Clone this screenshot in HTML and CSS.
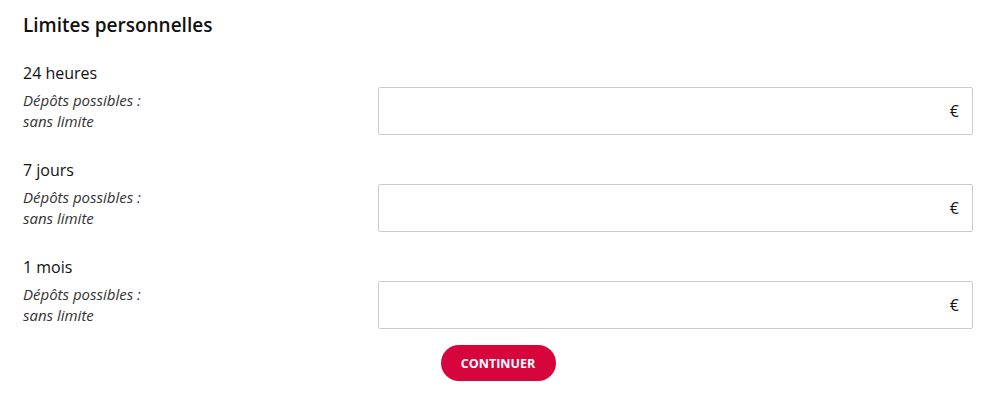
FILE: index.html
```html
<!DOCTYPE html>
<html lang="fr">
<head>
    <meta charset="UTF-8">
    <meta name="viewport" content="width=device-width, initial-scale=1.0">
    <title>Limites personnelles</title>
    <link rel="stylesheet" href="styles.css">
</head>
<body>
    <div id="limits-form">
        <h2>Limites personnelles</h2>

        <div class="limit-row">
            <div class="limit-label">24 heures</div>
            <div class="limit-line">
                <p class="limit-info">Dépôts possibles :<br>sans limite</p>
                <div class="amount-field">
                    <input type="text" id="limit-day">
                    <span class="currency">€</span>
                </div>
            </div>
        </div>

        <div class="limit-row">
            <div class="limit-label">7 jours</div>
            <div class="limit-line">
                <p class="limit-info">Dépôts possibles :<br>sans limite</p>
                <div class="amount-field">
                    <input type="text" id="limit-week">
                    <span class="currency">€</span>
                </div>
            </div>
        </div>

        <div class="limit-row">
            <div class="limit-label">1 mois</div>
            <div class="limit-line">
                <p class="limit-info">Dépôts possibles :<br>sans limite</p>
                <div class="amount-field">
                    <input type="text" id="limit-month">
                    <span class="currency">€</span>
                </div>
            </div>
        </div>

        <div class="actions">
            <button class="submit-button">Continuer</button>
        </div>
    </div>
</body>
</html>
```

FILE: styles.css
```css
body {
    font-family: "Open Sans", Arial, sans-serif;
    margin: 0;
    color: #111;
    background: #fff;
}
#limits-form {
    padding: 11px 23px 0 23px;
}
#limits-form h2 {
    font-size: 19px;
    font-weight: 600;
    line-height: 28px;
    margin: 0 0 23px;
}
.limit-row {
    margin-bottom: 24px;
}
.limit-label {
    font-size: 16px;
    line-height: 22px;
    margin-bottom: 3px;
}
.limit-line {
    display: flex;
    align-items: center;
}
.limit-info {
    width: 355px;
    flex-shrink: 0;
    margin: 0;
    font-size: 15px;
    font-style: italic;
    line-height: 21px;
    color: #333;
}
.amount-field {
    position: relative;
    flex: 1;
}
.amount-field input {
    width: 100%;
    height: 48px;
    box-sizing: border-box;
    border: 1px solid #ccc;
    border-radius: 2px;
    padding: 0 36px 0 12px;
    font-family: inherit;
    font-size: 16px;
}
.currency {
    position: absolute;
    right: 14px;
    top: 13px;
    font-size: 16px;
    line-height: 22px;
}
.actions {
    display: flex;
    justify-content: center;
    margin-top: -8px;
}
.submit-button {
    background-color: #d6063d;
    color: white;
    border: none;
    border-radius: 18px;
    height: 36px;
    width: 115px;
    font-family: inherit;
    font-size: 12.5px;
    font-weight: 700;
    text-transform: uppercase;
    cursor: pointer;
}
```
